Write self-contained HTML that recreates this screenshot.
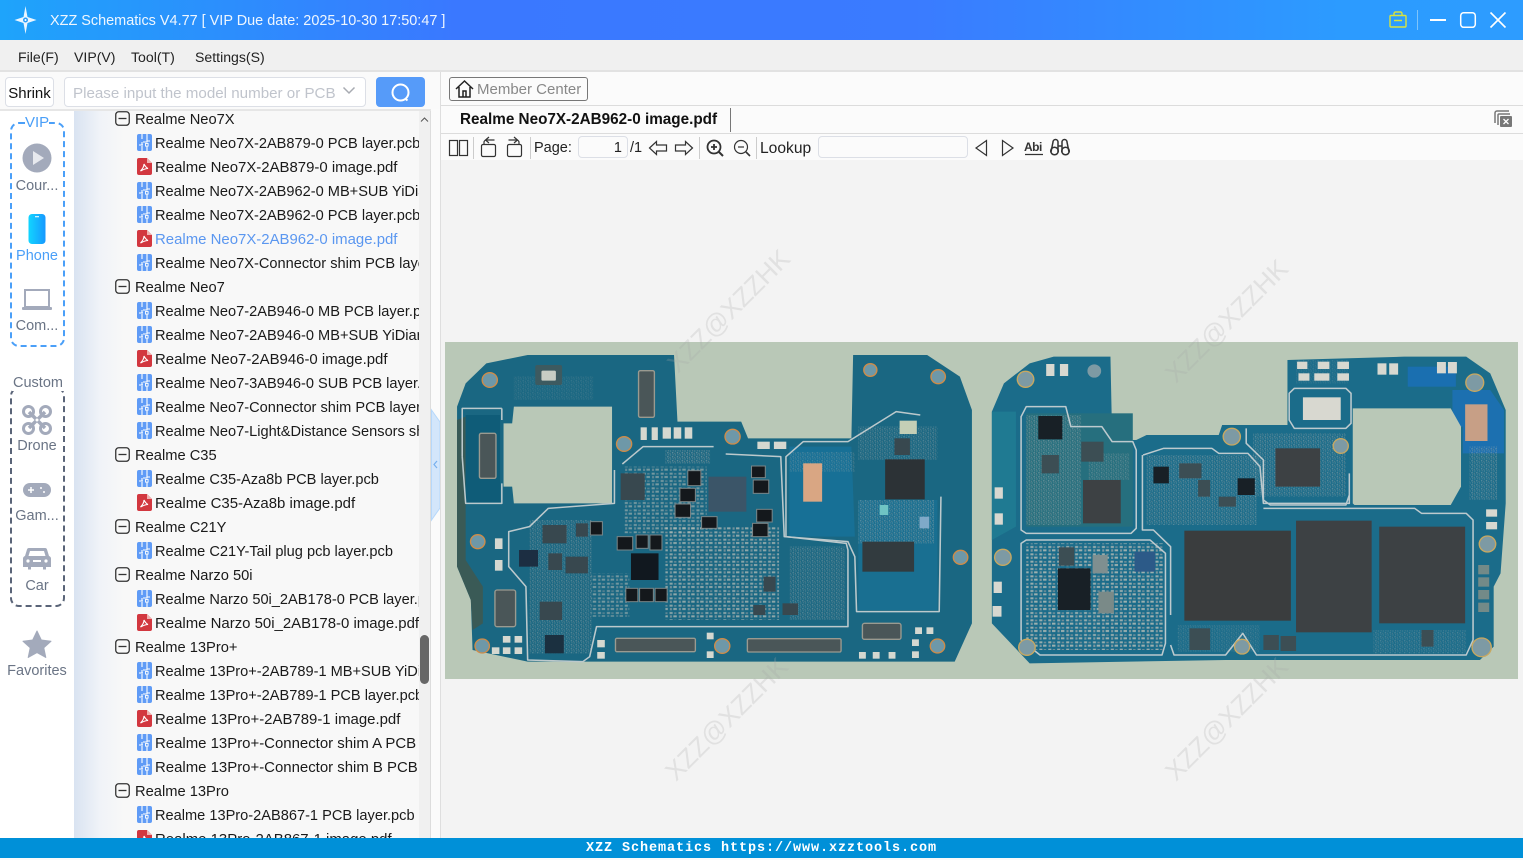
<!DOCTYPE html>
<html><head><meta charset="utf-8"><title>XZZ Schematics</title>
<style>
*{box-sizing:border-box}
html,body{margin:0;padding:0;width:1523px;height:858px;overflow:hidden;background:#fafafa;font-family:"Liberation Sans","Noto Sans CJK SC",sans-serif;color:#222}
.a{position:absolute;white-space:nowrap}
#title{left:0;top:0;width:1523px;height:40px;background:linear-gradient(90deg,#1ea4fb 0,#3a78ff 30%,#3a7bff 60%,#2c9bff 88%,#2d9cff 100%);color:#eef6ff;font-size:14.45px;line-height:43px;padding-left:50px}
#menu{left:0;top:40px;width:1523px;height:32px;background:#f0f0f0;border-bottom:2px solid #e2e2e2;font-size:14.1px;line-height:35px}
#menu span{position:absolute;top:0}
.box{border:1px solid #dcdfe6;border-radius:4px;background:#fff}
#side{left:0;top:109px;width:74px;height:729px;background:#fff}
.lb{left:0;width:74px;text-align:center;font-size:14.5px;color:#6a7485}
#treeWrap{left:74px;top:111px;width:357px;height:727px;overflow:hidden;background:linear-gradient(90deg,#d9e3f1 0,#f0f3f8 26px,#f8f8f8 50px)}
#tree{position:absolute;left:0;top:-5px;width:345px;overflow:hidden;font-size:14.6px;line-height:28px}
.r{height:24px;position:relative;white-space:nowrap;color:#1a1a1a}
.r svg{position:absolute}
.g{padding-left:61px;font-size:14.7px}.g svg{left:41px;top:5px;width:15px;height:15px}
.f{padding-left:81px}.f svg{left:63px;top:4px;width:15px;height:17px}
.q{font-size:14.95px}
.blue{color:#5b97f0}
#sb{left:419px;top:111px;width:12px;height:727px;background:#f0f0f0;border-right:1px solid #ddd}
#thumb{left:420px;top:635px;width:9px;height:49px;background:#666;border-radius:5px}
#bar{left:0;top:838px;width:1523px;height:20px;background:#0090d8;color:#fff;font-family:"Liberation Mono",monospace;font-size:13.5px;font-weight:bold;line-height:22px;text-align:center;letter-spacing:.9px}
#main{left:441px;top:160px;width:1082px;height:678px;background:#f3f3f3}
.t{font-size:14.5px;color:#222}
.sep{width:1px;height:22px;top:137px;background:#ccc}
</style></head>
<body>
<svg width="0" height="0" style="position:absolute">
<defs>
<symbol id="m" viewBox="0 0 15 15"><rect x=".75" y=".75" width="13.5" height="13.5" rx="3" fill="#f8f8f8" stroke="#333" stroke-width="1.3"/><path d="M3.5 7.5h8" stroke="#333" stroke-width="1.3"/></symbol>
<symbol id="p" viewBox="0 0 15 17"><rect x="0" y="0" width="15" height="17" rx="2" fill="#5f9bf6"/><path d="M5 0v5M5 8v3H2M5 17v-5M10 0v8H6M10 12v5M13 7h-3M3 11h3" stroke="#fff" stroke-width="1.1" fill="none"/><rect x="8.5" y="9.5" width="2.6" height="2.6" fill="none" stroke="#fff" stroke-width=".9"/></symbol>
<symbol id="d" viewBox="0 0 15 17"><path d="M2 0h8l5 5v10a2 2 0 0 1-2 2H2a2 2 0 0 1-2-2V2a2 2 0 0 1 2-2z" fill="#d2373f"/><path d="M10 0v5h5z" fill="#eeb0b0"/><path d="M7 6c0 3-1.500 5-3.500 7 2-1 4.500-2.500 7.500-2.500-2-1-3-2.500-4-4.500z" fill="none" stroke="#fff" stroke-width="1.100"/></symbol>
</defs>
</svg>

<div class="a" id="title">XZZ Schematics V4.77 [ VIP Due date: 2025-10-30 17:50:47 ]</div>
<svg class="a" style="left:12px;top:5px" width="28" height="30" viewBox="0 0 28 30"><path d="M13.500 1l2 11 9 3-9 3-2 11-2-11-9-3 9-3z" fill="#eaf6ff"/><circle cx="13.500" cy="15" r="2.500" fill="#2a9cf8"/><circle cx="13.500" cy="15" r="1" fill="#fff"/></svg>
<svg class="a" style="left:1385px;top:8px" width="130" height="24" viewBox="1385 8 130 24" fill="none">
<path d="M1391 15.500h14a1 1 0 0 1 1 1v9.500a1 1 0 0 1-1 1h-14a1 1 0 0 1-1-1v-9.500a1 1 0 0 1 1-1zM1394 15.500v-2a1.500 1.500 0 0 1 1.500-1.500h5a1.500 1.500 0 0 1 1.500 1.500v2M1394 20.500h8" stroke="#d8e33f" stroke-width="1.400"/>
<path d="M1417.500 10v20" stroke="#7fc4fb"/>
<path d="M1430 20h16" stroke="#fff" stroke-width="2"/>
<rect x="1460.700" y="12.700" width="14.600" height="14.600" rx="3" stroke="#fff" stroke-width="1.500"/>
<path d="M1490.500 12.500l15 15M1505.500 12.500l-15 15" stroke="#fff" stroke-width="1.600"/></svg>

<div class="a" id="menu"><span style="left:18px">File(F)</span><span style="left:74px">VIP(V)</span><span style="left:131px">Tool(T)</span><span style="left:195px">Settings(S)</span></div>

<div class="a" id="side"></div>
<div class="a box" style="left:5px;top:77px;width:49px;height:30px;font-size:15px;line-height:31px;text-align:center;color:#111">Shrink</div>
<div class="a box" style="left:64px;top:77px;width:302px;height:30px;font-size:15.15px;line-height:31px;padding-left:8px;color:#c0c4cc">Please input the model number or PCB</div>
<svg class="a" style="left:342px;top:86px" width="14" height="10" fill="none"><path d="M1.500 1.500L7 7l5.500-5.500" stroke="#a8abb2" stroke-width="1.500"/></svg>
<div class="a" style="left:376px;top:77px;width:49px;height:30px;background:#569bf9;border-radius:4px"></div>
<svg class="a" style="left:390px;top:82px" width="22" height="21" fill="none"><circle cx="10.500" cy="10.500" r="8" stroke="#fff" stroke-width="2"/><path d="M15 16.500l2.500 2" stroke="#fff" stroke-width="2"/></svg>
<div class="a" style="left:0;top:109px;width:441px;height:2px;background:#e6e6e6"></div>

<div class="a" style="left:10px;top:122px;width:55px;height:225px;border:2px dashed #4a9ff8;border-radius:9px"></div>
<div class="a" style="left:25px;top:113px;width:24px;height:18px;background:#fff;color:#4a9ff8;font-size:15px;text-align:center;line-height:20px">VIP</div>
<svg class="a" style="left:22px;top:143px" width="30" height="30"><circle cx="15" cy="15" r="14.500" fill="#a3aabb"/><path d="M11 8l11 7-11 7z" fill="#e7e9ee"/></svg>
<div class="a lb" style="top:178px">Cour...</div>
<svg class="a" style="left:27px;top:213px" width="20" height="32"><defs><linearGradient id="ph" x1="0" x2="1" y1="0" y2="0"><stop offset="0" stop-color="#12d5ff"/><stop offset="1" stop-color="#1798ff"/></linearGradient></defs><rect x="1.500" y="1" width="17" height="30" rx="3.500" fill="url(#ph)"/><rect x="8" y="3" width="4" height="1.300" fill="#cdf4ff"/></svg>
<div class="a lb" style="top:248px;color:#4a9ff8">Phone</div>
<svg class="a" style="left:21px;top:288px" width="32" height="24" fill="none"><rect x="4" y="2" width="24" height="17" stroke="#a3aabb" stroke-width="2"/><rect x="1" y="19" width="30" height="3" rx="1" fill="#a3aabb"/></svg>
<div class="a lb" style="top:318px">Com...</div>

<div class="a" style="left:10px;top:387px;width:55px;height:220px;border:2px dashed #5a6478;border-radius:9px"></div>
<div class="a" style="left:12px;top:375px;width:52px;height:16px;background:#fff;color:#6a7485;font-size:14.5px;text-align:center;line-height:17px">Custom</div>
<svg class="a" style="left:22px;top:405px" width="30" height="30" fill="none" stroke="#a3aabb"><circle cx="6.500" cy="6.500" r="5" stroke-width="3"/><circle cx="23.500" cy="6.500" r="5" stroke-width="3"/><circle cx="6.500" cy="23.500" r="5" stroke-width="3"/><circle cx="23.500" cy="23.500" r="5" stroke-width="3"/><path d="M7 7l16 16M23 7L7 23" stroke-width="3.500"/><circle cx="15" cy="15" r="2" fill="#fff" stroke-width="1"/></svg>
<div class="a lb" style="top:438px">Drone</div>
<svg class="a" style="left:23px;top:483px" width="28" height="15"><rect width="28" height="14" rx="7" fill="#a3aabb"/><path d="M5 7h6M8 4v6" stroke="#fff" stroke-width="1.500"/><circle cx="18" cy="5" r="1" fill="#fff"/><circle cx="21" cy="9" r="1" fill="#fff"/></svg>
<div class="a lb" style="top:508px">Gam...</div>
<svg class="a" style="left:23px;top:547px" width="28" height="24"><path d="M6 1h16a2 2 0 0 1 2 1.500l2 6.500a3 3 0 0 1 2 3v8h-5v2.500h-3V20H8v2.500H5V20H0v-8a3 3 0 0 1 2-3l2-6.500A2 2 0 0 1 6 1z" fill="#a3aabb"/><path d="M7 4h14l1.500 5h-17z" fill="#fff"/><circle cx="5" cy="14" r="1.600" fill="#fff"/><circle cx="23" cy="14" r="1.600" fill="#fff"/><rect x="10" y="13" width="8" height="2" fill="#fff"/></svg>
<div class="a lb" style="top:578px">Car</div>
<svg class="a" style="left:22px;top:629px" width="30" height="30"><path d="M15 2l4.300 9 9.700 1.200-7.200 6.600 2 9.700L15 23.600 6.200 28.500l2-9.700L1 12.200 10.700 11z" fill="#a3aabb" stroke="#a3aabb" stroke-linejoin="round" stroke-width="1"/></svg>
<div class="a lb" style="top:663px">Favorites</div>

<div class="a" id="treeWrap"><div id="tree">
<div class="r g"><svg><use href="#m"/></svg>Realme Neo7X</div>
<div class="r f"><svg><use href="#p"/></svg>Realme Neo7X-2AB879-0 PCB layer.pcb</div>
<div class="r f q"><svg><use href="#d"/></svg>Realme Neo7X-2AB879-0 image.pdf</div>
<div class="r f"><svg><use href="#p"/></svg>Realme Neo7X-2AB962-0 MB+SUB YiDian</div>
<div class="r f"><svg><use href="#p"/></svg>Realme Neo7X-2AB962-0 PCB layer.pcb</div>
<div class="r f q blue"><svg><use href="#d"/></svg>Realme Neo7X-2AB962-0 image.pdf</div>
<div class="r f"><svg><use href="#p"/></svg>Realme Neo7X-Connector shim PCB layer</div>
<div class="r g"><svg><use href="#m"/></svg>Realme Neo7</div>
<div class="r f"><svg><use href="#p"/></svg>Realme Neo7-2AB946-0 MB PCB layer.pcb</div>
<div class="r f"><svg><use href="#p"/></svg>Realme Neo7-2AB946-0 MB+SUB YiDian</div>
<div class="r f q"><svg><use href="#d"/></svg>Realme Neo7-2AB946-0 image.pdf</div>
<div class="r f"><svg><use href="#p"/></svg>Realme Neo7-3AB946-0 SUB PCB layer.pcb</div>
<div class="r f"><svg><use href="#p"/></svg>Realme Neo7-Connector shim PCB layer</div>
<div class="r f"><svg><use href="#p"/></svg>Realme Neo7-Light&amp;Distance Sensors shim</div>
<div class="r g"><svg><use href="#m"/></svg>Realme C35</div>
<div class="r f"><svg><use href="#p"/></svg>Realme C35-Aza8b PCB layer.pcb</div>
<div class="r f q"><svg><use href="#d"/></svg>Realme C35-Aza8b image.pdf</div>
<div class="r g"><svg><use href="#m"/></svg>Realme C21Y</div>
<div class="r f"><svg><use href="#p"/></svg>Realme C21Y-Tail plug pcb layer.pcb</div>
<div class="r g"><svg><use href="#m"/></svg>Realme Narzo 50i</div>
<div class="r f"><svg><use href="#p"/></svg>Realme Narzo 50i_2AB178-0 PCB layer.pcb</div>
<div class="r f q"><svg><use href="#d"/></svg>Realme Narzo 50i_2AB178-0 image.pdf</div>
<div class="r g"><svg><use href="#m"/></svg>Realme 13Pro+</div>
<div class="r f"><svg><use href="#p"/></svg>Realme 13Pro+-2AB789-1 MB+SUB YiDian</div>
<div class="r f"><svg><use href="#p"/></svg>Realme 13Pro+-2AB789-1 PCB layer.pcb</div>
<div class="r f q"><svg><use href="#d"/></svg>Realme 13Pro+-2AB789-1 image.pdf</div>
<div class="r f q"><svg><use href="#p"/></svg>Realme 13Pro+-Connector shim A PCB</div>
<div class="r f q"><svg><use href="#p"/></svg>Realme 13Pro+-Connector shim B PCB</div>
<div class="r g"><svg><use href="#m"/></svg>Realme 13Pro</div>
<div class="r f"><svg><use href="#p"/></svg>Realme 13Pro-2AB867-1 PCB layer.pcb</div>
<div class="r f q"><svg><use href="#d"/></svg>Realme 13Pro-2AB867-1 image.pdf</div>
</div></div>
<div class="a" id="sb"></div>
<svg class="a" style="left:420px;top:116px" width="9" height="7" fill="none"><path d="M1 5.500l3.500-3.500 3.500 3.500" stroke="#555" stroke-width="1"/></svg>
<div class="a" id="thumb"></div>
<div class="a" style="left:431px;top:109px;width:9px;height:729px;background:#fbfbfb"></div>
<svg class="a" style="left:431px;top:408px" width="10" height="114"><path d="M0.500 2L9 14v86L0.500 112z" fill="#d3e6fb" stroke="#b6d8fb"/><path d="M6 53l-3 3.500 3 3.500" stroke="#78b0ee" stroke-width="1.200" fill="none"/></svg>
<div class="a" style="left:440px;top:72px;width:1px;height:766px;background:#dedede"></div>

<div class="a" style="left:441px;top:72px;width:1082px;height:88px;background:#fbfbfb"></div>
<div class="a" style="left:441px;top:105px;width:1082px;height:1px;background:#dcdcdc"></div>
<div class="a" style="left:441px;top:133px;width:1082px;height:1px;background:#dcdcdc"></div>
<div class="a" style="left:449px;top:77px;width:139px;height:24px;border:1px solid #777;border-radius:3px;background:#fbfbfb;color:#888;font-size:15px;line-height:23px;padding-left:27px">Member Center</div>
<svg class="a" style="left:455px;top:79px" width="19" height="20" fill="none" stroke="#222" stroke-width="1.500"><path d="M1 10L9.500 2 18 10M4 8v10h11V8M8 18v-6h3v6"/></svg>
<div class="a" style="left:460px;top:108px;font-size:15.27px;font-weight:bold;line-height:24px;color:#111">Realme Neo7X-2AB962-0 image.pdf</div>
<div class="a" style="left:730px;top:108px;width:1px;height:24px;background:#777"></div>
<svg class="a" style="left:1494px;top:110px" width="19" height="18" fill="none"><path d="M15 1H3a2 2 0 0 0-2 2v10" stroke="#777" stroke-width="1.500"/><path d="M16 4H5a1 1 0 0 0-1 1v10" stroke="#777" stroke-width="1.500"/><rect x="6" y="6" width="12" height="11" rx="1" fill="#777"/><path d="M9.500 9l5 5M14.500 9l-5 5" stroke="#fff" stroke-width="1.300"/></svg>

<svg class="a" style="left:445px;top:134px" width="630" height="26" viewBox="445 134 630 26" fill="none" stroke="#333" stroke-width="1.200">
<rect x="449.500" y="140.500" width="8" height="15"/><rect x="459.500" y="140.500" width="8" height="15"/>
<rect x="481.500" y="144.500" width="14" height="12" rx="1.500"/><path d="M484 144v-1.500a2.500 2.500 0 0 1 2.500-2.500h8M489 137l-3.500 3 3.500 3"/>
<rect x="507.500" y="144.500" width="14" height="12" rx="1.500"/><path d="M519 144v-1.500a2.500 2.500 0 0 0-2.500-2.500h-8M514 137l3.500 3-3.500 3"/>
<path d="M649.500 148l7-6.500v3.500h10v6h-10v3.500z"/><path d="M692.500 148l-7-6.500v3.500h-10v6h10v3.500z"/>
<circle cx="714" cy="147" r="6.500" stroke-width="1.800"/><path d="M719 152l4 4" stroke-width="2"/><path d="M711 147h6M714 144v6" stroke-width="1.800"/>
<circle cx="741" cy="147" r="6.500"/><path d="M746 152l4 4" stroke-width="1.600"/><path d="M738 147h6"/>
<path d="M986.500 140.500v15L976 148z"/><path d="M1002.500 140.500v15L1013 148z"/>
<path d="M1025 154.500h18" stroke-width="1.200"/>
<path d="M1051 152l2-10a2.500 2.500 0 0 1 5 0v10M1069 152l-2-10a2.500 2.500 0 0 0-5 0v10M1058 146h4" stroke-width="1.500"/>
<circle cx="1054.500" cy="151" r="3.800" stroke-width="1.500"/><circle cx="1065.500" cy="151" r="3.800" stroke-width="1.500"/>
</svg>
<div class="a" style="left:1024px;top:140px;font-size:12px;font-weight:bold;line-height:14px;color:#333;letter-spacing:-.5px">Abi</div>
<div class="a sep" style="left:473px"></div><div class="a sep" style="left:530px"></div><div class="a sep" style="left:699px"></div><div class="a sep" style="left:756px"></div>
<div class="a t" style="left:534px;top:140px">Page:</div>
<div class="a box" style="left:578px;top:136px;width:50px;height:22px;font-size:14.5px;line-height:23px;text-align:right;padding-right:5px;color:#222;background:#fbfbfb">1</div>
<div class="a t" style="left:630px;top:140px">/1</div>
<div class="a t" style="left:760px;top:140px;font-size:15.6px">Lookup</div>
<div class="a box" style="left:818px;top:136px;width:150px;height:22px;background:#fbfbfb"></div>

<div class="a" id="main"></div>

<svg class="a" style="left:441px;top:160px" width="1082" height="678" viewBox="441 160 1082 678">
<defs>
<pattern id="c1" width="26" height="22" patternUnits="userSpaceOnUse"><rect x="2" y="2" width="9" height="6" fill="#aeb8b4"/><rect x="15" y="3" width="7" height="5" fill="#80949c"/><rect x="3" y="12" width="6" height="7" fill="#8f9fa4"/><rect x="13" y="12" width="10" height="6" fill="#b4bcb6"/></pattern>
<pattern id="c2" width="14" height="12" patternUnits="userSpaceOnUse"><rect x="1" y="1" width="4" height="3" fill="#a0aeb0"/><rect x="8" y="2" width="3" height="4" fill="#74898f"/><rect x="3" y="7" width="3" height="3" fill="#88999d"/><rect x="9" y="8" width="4" height="2" fill="#aeb8b4"/></pattern>
</defs>
<rect x="445" y="342" width="1073" height="337" fill="#b9c8b7"/>

<g transform="translate(445 340) scale(.3444 .33333)">
<path d="M35 200L60 130 120 70 240 45H665L675 245H860L880 295H1180L1185 45H1400L1495 110 1530 210V850L1480 965H240L80 930 75 780 35 680Z" fill="#1a6782"/>
<path d="M35 240L60 230V660L110 740V850L80 870 75 780 35 680Z" fill="#3a5a56"/>
<path d="M1000 320H1180L1190 590H1000Z" fill="#1578a8" opacity=".55"/>
<path d="M1200 480H1430V810H1200Z" fill="#1878a0" opacity=".5"/>
<path d="M200 200H485V490H200L195 440H170V250H195Z" fill="#b9c8b7"/>
<rect x="60" y="225" width="100" height="265" fill="#0f5c78"/>
<rect x="640" y="560" width="330" height="280" fill="url(#c1)" opacity=".75"/>
<rect x="520" y="380" width="240" height="200" fill="url(#c1)" opacity=".6"/>
<rect x="425" y="700" width="110" height="130" fill="url(#c1)" opacity=".6"/>
<rect x="245" y="540" width="180" height="400" fill="url(#c2)" opacity=".65"/>
<rect x="1000" y="620" width="160" height="220" fill="url(#c2)" opacity=".65"/>
<rect x="1200" y="260" width="230" height="100" fill="url(#c2)" opacity=".6"/>
<rect x="1200" y="480" width="220" height="130" fill="url(#c2)" opacity=".7"/>
<rect x="1000" y="335" width="190" height="60" fill="url(#c2)" opacity=".5"/>
<rect x="640" y="330" width="130" height="40" fill="url(#c2)" opacity=".8"/>
<rect x="200" y="110" width="230" height="70" fill="url(#c2)" opacity=".3"/>
<g fill="#38484f"><rect x="510" y="400" width="70" height="80"/><rect x="283" y="555" width="70" height="55"/><rect x="300" y="640" width="40" height="50"/><rect x="350" y="650" width="65" height="50"/><rect x="275" y="785" width="65" height="55"/><rect x="1305" y="295" width="45" height="50"/><rect x="925" y="710" width="35" height="45"/><rect x="980" y="790" width="45" height="35"/><rect x="895" y="795" width="35" height="30"/><rect x="380" y="550" width="35" height="40"/></g>
<rect x="765" y="410" width="110" height="105" fill="#3b5568"/>
<rect x="540" y="640" width="80" height="80" fill="#11181f"/>
<rect x="215" y="630" width="55" height="50" fill="#1c2e42"/>
<rect x="290" y="885" width="55" height="55" fill="#1b3040"/>
<rect x="1278" y="358" width="115" height="120" fill="#2c3236"/>
<rect x="1212" y="605" width="150" height="90" fill="#323b3f"/>
<rect x="1040" y="370" width="55" height="115" fill="#d9a683"/>
<rect x="1320" y="242" width="50" height="40" fill="#c4cfb6"/>
<rect x="1262" y="495" width="25" height="30" fill="#6fc4c4"/>
<rect x="1378" y="530" width="28" height="35" fill="#7fa9c8"/>
<g fill="#14181c" stroke="#7a8688" stroke-width="3"><rect x="890" y="378" width="40" height="35"/><rect x="895" y="420" width="45" height="40"/><rect x="905" y="508" width="45" height="38"/><rect x="893" y="550" width="45" height="40"/><rect x="745" y="530" width="45" height="35"/><rect x="668" y="492" width="45" height="40"/><rect x="682" y="445" width="45" height="40"/><rect x="705" y="392" width="38" height="45"/><rect x="500" y="590" width="45" height="40"/><rect x="555" y="585" width="35" height="40"/><rect x="595" y="585" width="35" height="45"/><rect x="525" y="745" width="35" height="40"/><rect x="565" y="745" width="40" height="40"/><rect x="610" y="745" width="35" height="40"/><rect x="422" y="545" width="35" height="40"/></g>
<g fill="#4a5658" stroke="#9a9a90" stroke-width="4"><rect x="145" y="750" width="60" height="110" rx="6"/><rect x="100" y="280" width="48" height="135" rx="5"/><rect x="562" y="92" width="46" height="140" rx="5"/><rect x="495" y="895" width="232" height="40" rx="4"/><rect x="878" y="896" width="272" height="40" rx="4"/><rect x="1212" y="850" width="112" height="48" rx="6"/></g>
<rect x="262" y="75" width="78" height="60" rx="6" fill="#3d5a60"/><rect x="280" y="92" width="42" height="30" rx="4" fill="#c8cdc4"/>
<g fill="none" stroke="#bcc9cc" stroke-width="4.500" stroke-linejoin="round"><path d="M50 350V205H165M165 205V240M165 430V490H60L50 350"/><path d="M492 390V490L300 505 245 560 185 575V680L235 740 240 960 400 965 420 950 440 860H1170V630L1165 610 990 590V350L1040 305H1170L1310 215 1380 225"/><path d="M515 372L575 320H780"/><path d="M815 342L975 350 985 590 1170 605 1190 650 1195 815H1435L1440 470"/></g>
<g fill="#6e98a8" stroke="#cf8c48" stroke-width="4"><circle cx="130" cy="120" r="22"/><circle cx="95" cy="605" r="21"/><circle cx="108" cy="918" r="21"/><circle cx="520" cy="312" r="22"/><circle cx="835" cy="290" r="22"/><circle cx="805" cy="918" r="22"/><circle cx="1235" cy="90" r="19"/><circle cx="1432" cy="110" r="21"/><circle cx="1497" cy="652" r="21"/><circle cx="1430" cy="918" r="21"/></g>
<g fill="#d5d8d0"><rect x="168" y="888" width="22" height="20"/><rect x="202" y="888" width="22" height="20"/><rect x="136" y="922" width="22" height="20"/><rect x="168" y="922" width="22" height="20"/><rect x="202" y="922" width="22" height="20"/><rect x="442" y="900" width="22" height="22"/><rect x="442" y="936" width="22" height="20"/><rect x="760" y="878" width="20" height="20"/><rect x="760" y="934" width="20" height="20"/><rect x="1365" y="862" width="20" height="20"/><rect x="1398" y="862" width="20" height="20"/><rect x="1356" y="898" width="20" height="20"/><rect x="1356" y="934" width="20" height="20"/><rect x="1202" y="936" width="20" height="20"/><rect x="1242" y="936" width="20" height="20"/><rect x="1288" y="936" width="20" height="20"/><rect x="145" y="595" width="22" height="32"/><rect x="145" y="660" width="22" height="32"/><rect x="568" y="262" width="18" height="38"/><rect x="600" y="262" width="18" height="38"/><rect x="632" y="262" width="24" height="34"/><rect x="664" y="262" width="22" height="34"/><rect x="696" y="262" width="22" height="34"/><rect x="907" y="305" width="36" height="22"/><rect x="955" y="305" width="36" height="22"/></g>
</g>

<g transform="translate(985 340) scale(.3437 .33333)">
<path d="M20 215L55 130 130 70 200 50H365L370 300H440L470 285H680L690 255H880V60L1220 50H1400L1470 100 1515 210V490L1500 700 1480 740V920L1440 960H700L130 970 20 850Z" fill="#1b6c8a"/>
<path d="M20 215H90V560L20 600Z" fill="#1f7a92"/>
<rect x="1230" y="80" width="140" height="60" fill="#1a6fb0"/>
<path d="M1360 150H1470L1510 210V340H1390V260H1360Z" fill="#1c70b0"/>
<path d="M1070 205H1355L1385 260V440L1355 495H1075L1070 490Z" fill="#b9c8b7"/>
<rect x="1397" y="193" width="65" height="110" fill="#c79f86"/>
<rect x="120" y="220" width="310" height="340" fill="#266f7e"/>
<rect x="120" y="225" width="160" height="330" fill="url(#c2)" opacity=".75"/>
<rect x="300" y="340" width="120" height="80" fill="url(#c2)" opacity=".6"/>
<rect x="120" y="610" width="400" height="320" fill="url(#c1)" opacity=".85"/>
<rect x="470" y="345" width="320" height="210" fill="url(#c2)" opacity=".7"/>
<rect x="780" y="280" width="270" height="190" fill="url(#c2)" opacity=".7"/>
<rect x="905" y="60" width="150" height="70" fill="url(#c2)" opacity=".3"/>
<rect x="1410" y="320" width="80" height="160" fill="url(#c2)" opacity=".7"/>
<rect x="1130" y="870" width="270" height="70" fill="url(#c2)" opacity=".5"/>
<rect x="560" y="855" width="240" height="80" fill="url(#c2)" opacity=".4"/>
<g fill="#3d4144"><rect x="905" y="542" width="220" height="335"/><rect x="1147" y="560" width="250" height="290"/><rect x="285" y="420" width="110" height="130"/><rect x="845" y="325" width="130" height="115"/></g>
<rect x="580" y="572" width="310" height="270" fill="#3a3d3e"/>
<g fill="#182026"><rect x="212" y="685" width="95" height="125"/><rect x="155" y="228" width="70" height="70"/><rect x="490" y="380" width="45" height="50"/><rect x="735" y="415" width="50" height="50"/></g>
<g fill="#3c4e54"><rect x="280" y="305" width="65" height="60"/><rect x="165" y="345" width="50" height="55"/><rect x="565" y="370" width="65" height="45"/><rect x="620" y="420" width="35" height="50"/><rect x="680" y="470" width="50" height="30"/><rect x="595" y="865" width="60" height="65"/><rect x="810" y="885" width="45" height="45"/><rect x="860" y="888" width="45" height="45"/><rect x="1270" y="870" width="35" height="50"/><rect x="215" y="622" width="45" height="55"/></g>
<rect x="435" y="635" width="60" height="60" fill="#2c5a88"/>
<rect x="330" y="755" width="45" height="65" fill="#7a8a88"/>
<rect x="313" y="645" width="44" height="55" fill="#7f8f90"/>
<rect x="925" y="172" width="110" height="68" fill="#d8d8d0"/>
<g fill="none" stroke="#bdcace" stroke-width="4.500" stroke-linejoin="round">
<path d="M105 570V230L120 200H235L250 260H340L370 305H430L440 330V565L425 580H120Z"/>
<path d="M105 610V900L160 945H515L525 910V640L480 600H120Z"/>
<path d="M460 345L520 325H660L680 340H765L800 380 810 490H1060L1060 400"/>
<path d="M458 345V570H490L540 620V825"/>
<path d="M885 240V160L900 145H1050L1065 160V250L1050 265H900Z"/>
<path d="M760 265V310L810 360V480L830 495H1050L1060 465"/>
<path d="M540 915L550 945H700L750 880 790 945H1400L1420 900V540L1400 520H1270L1250 505H810"/>
</g>
<g fill="#7d9aa4" stroke="#c8a860" stroke-width="4"><circle cx="118" cy="118" r="24"/><circle cx="318" cy="93" r="20" stroke="none"/><circle cx="718" cy="290" r="25"/><circle cx="1035" cy="318" r="22"/><circle cx="1425" cy="128" r="26"/><circle cx="1462" cy="612" r="24"/><circle cx="52" cy="652" r="24"/><circle cx="122" cy="922" r="24"/><circle cx="748" cy="920" r="22"/><circle cx="1445" cy="922" r="28"/></g>
<g fill="#d8d8d0"><rect x="178" y="72" width="24" height="36"/><rect x="218" y="72" width="24" height="36"/><rect x="908" y="65" width="30" height="22"/><rect x="968" y="65" width="34" height="22"/><rect x="1025" y="65" width="34" height="22"/><rect x="912" y="100" width="32" height="22"/><rect x="958" y="100" width="44" height="22"/><rect x="1025" y="100" width="34" height="22"/><rect x="1142" y="70" width="26" height="34"/><rect x="1176" y="70" width="26" height="34"/><rect x="1315" y="66" width="26" height="34"/><rect x="1347" y="66" width="26" height="34"/><rect x="1458" y="508" width="32" height="22"/><rect x="1458" y="546" width="32" height="22"/><rect x="28" y="442" width="24" height="34"/><rect x="28" y="520" width="24" height="34"/><rect x="25" y="725" width="24" height="34"/><rect x="22" y="798" width="26" height="32"/></g>
<g fill="#8a9288" opacity=".8"><rect x="1435" y="675" width="32" height="28"/><rect x="1435" y="712" width="32" height="28"/><rect x="1435" y="750" width="32" height="28"/><rect x="1435" y="788" width="32" height="28"/></g>
</g>

<g font-family="Liberation Sans,sans-serif" font-size="26" fill="#a8a8a8" opacity=".24">
<text transform="translate(678 374) rotate(-45)">XZZ@XZZHK</text>
<text transform="translate(1176 384) rotate(-45)">XZZ@XZZHK</text>
<text transform="translate(676 782) rotate(-45)">XZZ@XZZHK</text>
<text transform="translate(1176 782) rotate(-45)">XZZ@XZZHK</text>
</g>
</svg>

<div class="a" id="bar">XZZ Schematics https://www.xzztools.com</div>
</body></html>
